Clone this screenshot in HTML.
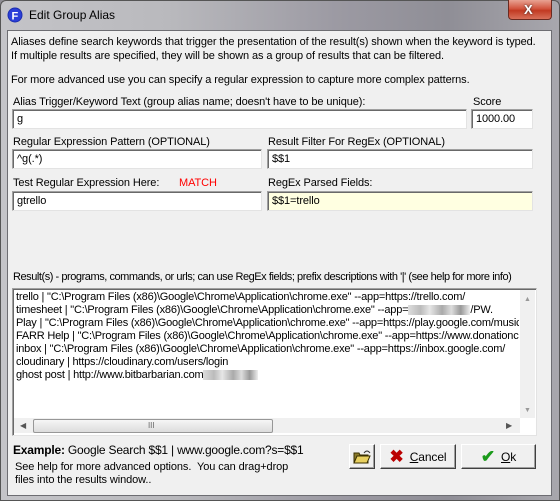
<!DOCTYPE html>
<html><head><meta charset="utf-8"><style>
*{margin:0;padding:0;box-sizing:border-box}
body{width:560px;height:501px;overflow:hidden;position:relative;font-family:"Liberation Sans",Tahoma,sans-serif;font-size:11px;color:#000;background:#8e8d94;letter-spacing:-0.1px}
.frame{position:absolute;left:0;top:0;width:560px;height:501px;border:1px solid #555;border-radius:6px 6px 0 0;background:linear-gradient(90deg,#c4c4c8 0%,#b9b9bd 30%,#9c9aa3 60%,#8f8e96 80%,#a8a7ad 100%)}
.client{position:absolute;left:7px;top:30px;width:545px;height:466px;background:#f0f0f0;border:1px solid #6d6d72}
.t{position:absolute;white-space:nowrap;line-height:13px}
.in{position:absolute;background:#fff;border:1px solid #a0a0a0;border-right-color:#e3e3e3;border-bottom-color:#e3e3e3;box-shadow:inset 1px 1px 0 #696969;padding:3px 0 0 4px;font-size:11px;line-height:13px;white-space:nowrap;overflow:hidden}
.btn{position:absolute;background:#f0f0f0;border:1px solid #fff;border-right-color:#404040;border-bottom-color:#404040;box-shadow:inset -1px -1px 0 #a0a0a0;display:flex;align-items:center;justify-content:center;font-size:12px}
.blur{display:inline-block;height:10px;vertical-align:middle;background:linear-gradient(90deg,#ddd,#bbb 20%,#e6e6e6 35%,#aaa 55%,#ddd 70%,#999 85%,#eee)}
</style></head><body>
<div class="frame"></div>
<svg style="position:absolute;left:7px;top:7px" width="16" height="16"><circle cx="8" cy="8" r="7.5" fill="#1b2db0"/><circle cx="8" cy="8" r="6.5" fill="#2b3fd8"/><text x="4.5" y="12.5" fill="#fff" font-family="Liberation Sans" font-weight="bold" font-size="11">F</text></svg>
<div class="t" style="left:29px;top:8px;font-size:12px;line-height:15px;letter-spacing:0">Edit Group Alias</div>
<div style="position:absolute;left:508px;top:0;width:44px;height:20px;border:1px solid #6b2a20;border-top:none;border-radius:0 0 4px 4px;background:linear-gradient(#e8a393,#d2553f 45%,#c23a22 55%,#d8705a)"></div>
<div class="t" style="left:524px;top:3px;color:#fff;font-weight:bold;font-size:13px;text-shadow:0 0 2px #333">X</div>
<div class="client"></div>

<div class="t" style="left:11px;top:36px">Aliases define search keywords that trigger the presentation of the result(s) shown when the keyword is typed.</div>
<div class="t" style="left:11px;top:50px">If multiple results are specified, they will be shown as a group of results that can be filtered.</div>
<div class="t" style="left:11px;top:74px">For more advanced use you can specify a regular expression to capture more complex patterns.</div>

<div class="t" style="left:13px;top:96px">Alias Trigger/Keyword Text (group alias name; doesn't have to be unique):</div>
<div class="t" style="left:473px;top:96px">Score</div>
<div class="in" style="left:12px;top:109px;width:455px;height:20px">g</div>
<div class="in" style="left:471px;top:109px;width:62px;height:20px">1000.00</div>

<div class="t" style="left:13px;top:136px">Regular Expression Pattern (OPTIONAL)</div>
<div class="t" style="left:268px;top:136px">Result Filter For RegEx (OPTIONAL)</div>
<div class="in" style="left:12px;top:149px;width:250px;height:20px">^g(.*)</div>
<div class="in" style="left:267px;top:149px;width:266px;height:20px">$$1</div>

<div class="t" style="left:13px;top:177px">Test Regular Expression Here:</div>
<div class="t" style="left:179px;top:177px;color:#f00">MATCH</div>
<div class="t" style="left:268px;top:177px">RegEx Parsed Fields:</div>
<div class="in" style="left:12px;top:191px;width:250px;height:20px">gtrello</div>
<div class="in" style="left:267px;top:191px;width:266px;height:20px;background:#ffffe1">$$1=trello</div>

<div class="t" style="left:13px;top:271px;letter-spacing:-0.45px">Result(s) - programs, commands, or urls; can use RegEx fields; prefix descriptions with '|' (see help for more info)</div>

<div class="in" style="left:12px;top:288px;width:525px;height:148px;padding:2px 0 0 3px">
<div style="width:503px;overflow:hidden;line-height:13px;letter-spacing:-0.2px">
trello | "C:\Program Files (x86)\Google\Chrome\Application\chrome.exe" --app=https://trello.com/<br>
timesheet | "C:\Program Files (x86)\Google\Chrome\Application\chrome.exe" --app=<span class="blur" style="width:62px"></span>/PW.<br>
Play | "C:\Program Files (x86)\Google\Chrome\Application\chrome.exe" --app=https://play.google.com/music<br>
FARR Help | "C:\Program Files (x86)\Google\Chrome\Application\chrome.exe" --app=https://www.donationcoder<br>
inbox | "C:\Program Files (x86)\Google\Chrome\Application\chrome.exe" --app=https://inbox.google.com/<br>
cloudinary | https://cloudinary.com/users/login<br>
ghost post | http://www.bitbarbarian.com<span class="blur" style="width:55px"></span>
</div></div>
<div style="position:absolute;left:520px;top:290px;width:15px;height:128px;background:#f0f0f0"></div>
<div class="t" style="left:524px;top:293px;color:#999;font-size:7px">▲</div>
<div class="t" style="left:524px;top:404px;color:#999;font-size:7px">▼</div>
<div style="position:absolute;left:14px;top:418px;width:506px;height:15px;background:#f0f0f0"></div>
<div class="t" style="left:20px;top:419px;color:#555;font-size:8px">◀</div>
<div class="t" style="left:506px;top:419px;color:#555;font-size:8px">▶</div>
<div style="position:absolute;left:33px;top:419px;width:240px;height:14px;border:1px solid #979797;border-radius:2px;background:linear-gradient(#f6f6f6,#dcdcdc)"></div>
<div class="t" style="left:148px;top:419px;color:#666;font-size:8px">III</div>

<div class="t" style="left:13px;top:443px;font-size:12px;line-height:14px;letter-spacing:-0.2px"><b>Example:</b> Google Search $$1 | www.google.com?s=$$1</div>
<div class="t" style="left:15px;top:461px;font-size:11px">See help for more advanced options.&nbsp; You can drag+drop</div>
<div class="t" style="left:15px;top:474px;font-size:11px">files into the results window..</div>

<div class="btn" style="left:349px;top:444px;width:26px;height:25px">
<svg width="18" height="16"><path d="M1 4h5l1 2h8v8H1z" fill="#8a7a2a" stroke="#3a3000"/><path d="M1 14l3-7h13l-3 7z" fill="#e8d060" stroke="#3a3000"/><path d="M11 4q3-4 6 0" fill="none" stroke="#333"/></svg></div>
<div class="btn" style="left:380px;top:444px;width:76px;height:25px"><span style="color:#b00;font-weight:bold;font-size:17px;margin-right:6px">✖</span><span><u>C</u>ancel</span></div>
<div class="btn" style="left:461px;top:444px;width:75px;height:25px"><span style="color:#1a9a1a;font-weight:bold;font-size:17px;margin-right:6px">✔</span><span><u>O</u>k</span></div>
</body></html>
